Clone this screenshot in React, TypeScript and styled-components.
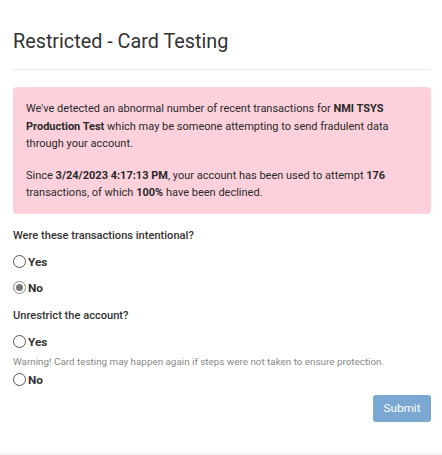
import React from "react";
import styled, { createGlobalStyle } from "styled-components";

const Global = createGlobalStyle`
  html, body { margin: 0; padding: 0; background: #f3f3f3; }
  body { font-family: Roboto, "Liberation Sans", sans-serif; color: #333; }
`;

const Card = styled.div`
  background: #fff;
  height: 453px;
  box-sizing: border-box;
  padding: 31px 11px 0 13px;
  display: flex;
  flex-direction: column;
`;

const Title = styled.h1`
  margin: 0;
  font-size: 19.8px;
  line-height: 22px;
  font-weight: 400;
  color: #333;
  padding-bottom: 16px;
  border-bottom: 1px solid #ececec;
`;

const Alert = styled.div`
  margin-top: 17px;
  background: #fcd1db;
  border-radius: 4px;
  padding: 13px 13px 12px 13px;
  font-size: 11px;
  line-height: 17.5px;
  color: #2a2a2a;
`;

const Para = styled.p`
  margin: 0;
  & + & { margin-top: 14px; }
  b { font-weight: 700; }
`;

const Question = styled.div<{ $top: number }>`
  margin-top: ${(p) => p.$top}px;
  font-size: 11.1px;
  font-weight: 500;
  line-height: 16px;
  color: #333;
`;

const Option = styled.label<{ $top: number }>`
  display: flex;
  align-items: center;
  gap: 2px;
  margin-top: ${(p) => p.$top}px;
  font-size: 11.8px;
  font-weight: 700;
  line-height: 16px;
  color: #333;
`;

const Radio = styled.span<{ $checked?: boolean }>`
  width: 13px;
  height: 13px;
  box-sizing: border-box;
  border-radius: 50%;
  border: 1px solid ${(p) => (p.$checked ? "#888" : "#555")};
  display: inline-flex;
  align-items: center;
  justify-content: center;
  background: #fff;
  &::after {
    content: "";
    display: ${(p) => (p.$checked ? "block" : "none")};
    width: 7px;
    height: 7px;
    border-radius: 50%;
    background: #777;
  }
`;

const Warning = styled.div`
  margin-top: 5px;
  font-size: 9.85px;
  line-height: 14px;
  color: #888;
`;

const Footer = styled.div`
  display: flex;
  justify-content: flex-end;
  margin-top: 7px;
`;

const Submit = styled.button`
  width: 58px;
  height: 27px;
  border: none;
  border-radius: 3px;
  background: #7ba8d2;
  color: #fff;
  font-family: Roboto, "Liberation Sans", sans-serif;
  font-size: 11.8px;
  padding: 0;
`;

export default function App() {
  return (
    <>
      <Global />
      <Card>
        <Title>Restricted - Card Testing</Title>
        <Alert>
          <Para>
            We've detected an abnormal number of recent transactions for <b>NMI TSYS Production Test</b> which may be someone attempting to send fradulent data through your account.
          </Para>
          <Para>
            Since <b>3/24/2023 4:17:13 PM</b>, your account has been used to attempt <b>176</b> transactions, of which <b>100%</b> have been declined.
          </Para>
        </Alert>
        <Question $top={14}>Were these transactions intentional?</Question>
        <Option $top={10}>
          <Radio />
          Yes
        </Option>
        <Option $top={10}>
          <Radio $checked />
          No
        </Option>
        <Question $top={12}>Unrestrict the account?</Question>
        <Option $top={10}>
          <Radio />
          Yes
        </Option>
        <Warning>Warning! Card testing may happen again if steps were not taken to ensure protection.</Warning>
        <Option $top={3}>
          <Radio />
          No
        </Option>
        <Footer>
          <Submit>Submit</Submit>
        </Footer>
      </Card>
    </>
  );
}
